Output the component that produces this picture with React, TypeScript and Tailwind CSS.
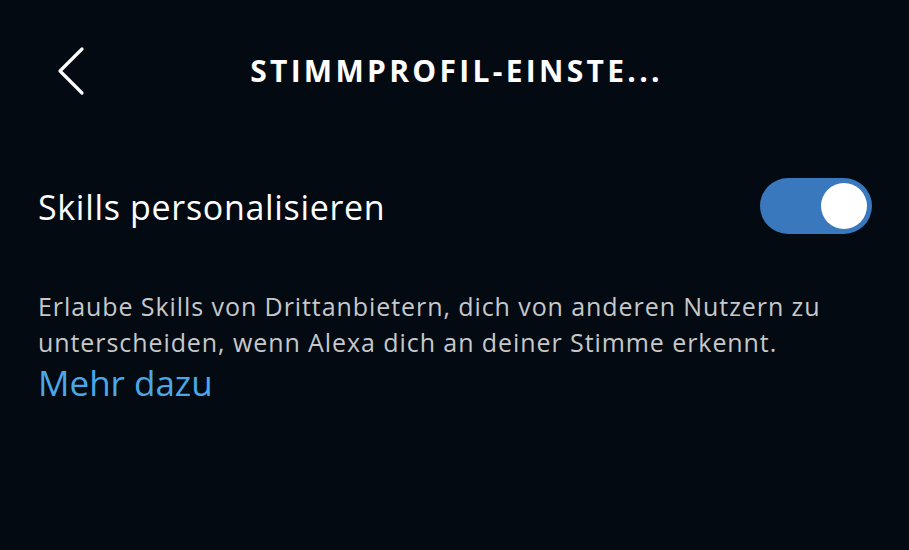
import React, { useState } from 'react';

const App: React.FC = () => {
  const [enabled, setEnabled] = useState(true);

  return (
    <div
      className="w-[909px] h-[550px] bg-[#030a12] text-white overflow-hidden"
      style={{ fontFamily: '"Open Sans", "Noto Sans", sans-serif' }}
    >
      {/* Header */}
      <div className="relative h-[140px] flex items-start justify-center pt-[47px]">
        <button className="absolute left-[54px] top-[46px] w-[32px] h-[50px] flex items-center justify-center">
          <svg width="30" height="50" viewBox="0 0 30 50" fill="none">
            <path d="M27 3 L5 25 L27 47" stroke="white" strokeWidth="3.2" strokeLinecap="round" strokeLinejoin="round" />
          </svg>
        </button>
        <h1 className="text-[30px] leading-[48px] font-bold tracking-[0.11em] text-white pl-[4px]">STIMMPROFIL-EINSTE...</h1>
      </div>

      {/* Toggle row */}
      <div className="flex items-center justify-between pl-[38px] pr-[37px] h-[136px] -mt-[2px]">
        <span className="text-[34px] tracking-[0.02em] text-white pt-[3px]">Skills personalisieren</span>
        <button
          onClick={() => setEnabled(!enabled)}
          className={`w-[112px] h-[56px] rounded-full p-[5px] flex items-center ${enabled ? 'bg-[#3a78be] justify-end' : 'bg-[#555b63] justify-start'}`}
        >
          <span className="w-[46px] h-[46px] rounded-full bg-white block" />
        </button>
      </div>

      {/* Description */}
      <div className="px-[38px] pt-[14px]">
        <p className="text-[25px] leading-[36px] tracking-[0.037em] text-[#c6c8ca]">
          Erlaube Skills von Drittanbietern, dich von anderen Nutzern zu unterscheiden, wenn Alexa dich an deiner Stimme erkennt.
        </p>
        <a className="block text-[35px] leading-[46px] text-[#4aa8e8]">Mehr dazu</a>
      </div>
    </div>
  );
};

export default App;
